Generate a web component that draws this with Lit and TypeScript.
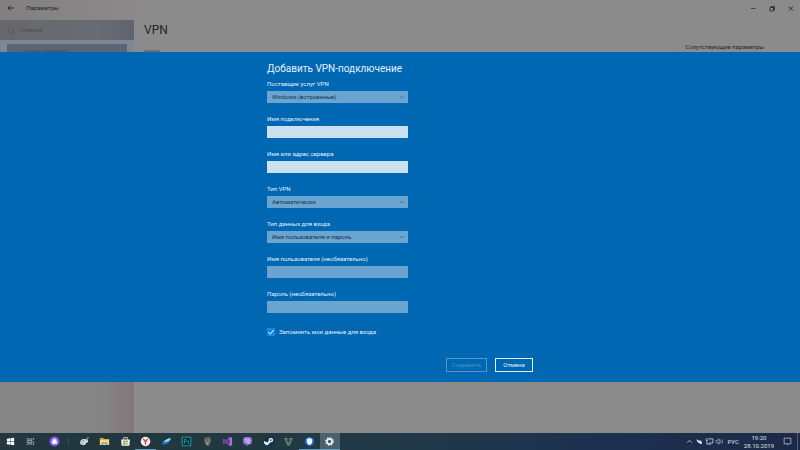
import { LitElement, html, css, svg, TemplateResult } from "lit";
import { customElement, property, state } from "lit/decorators.js";
import { classMap } from "lit/directives/class-map.js";

interface Field {
  id: string;
  label: string;
  kind: "select" | "text" | "password";
  value?: string;
  dim?: boolean;
}

const FIELDS: Field[] = [
  { id: "provider", label: "Поставщик услуг VPN", kind: "select", value: "Windows (встроенные)" },
  { id: "name", label: "Имя подключения", kind: "text" },
  { id: "server", label: "Имя или адрес сервера", kind: "text" },
  { id: "type", label: "Тип VPN", kind: "select", value: "Автоматически" },
  { id: "auth", label: "Тип данных для входа", kind: "select", value: "Имя пользователя и пароль" },
  { id: "user", label: "Имя пользователя (необязательно)", kind: "text", dim: true },
  { id: "password", label: "Пароль (необязательно)", kind: "password", dim: true },
];

interface App {
  name: string;
  icon: TemplateResult;
  running?: boolean;
  active?: boolean;
}

const SYSTEM: Record<string, TemplateResult> = {
  start: svg`<path fill="#f4fafc" d="M2 3 5.6 2.5V5.8H2ZM6 2.4 10 1.9V5.8H6ZM2 6.2H5.600V9.500L2 9ZM6 6.2H10V10.100L6 9.600Z"/>`,
  tasks: svg`<g fill="none" stroke="#b9c6cb" stroke-width=".8"><path d="M2.4 2.2V3.4H7.6V2.2M2.4 9.8V8.6H7.6V9.8M2.4 5H7.6V7H2.4ZM9.4 2.2V4.4M9.4 6V9.8"/></g>`,
  alice: svg`<circle cx="6" cy="6" r="5.500" fill="#7b55ea"/><circle cx="6" cy="6" r="3.8" fill="#9a7bf5"/><path fill="#fff" d="M6 2.8C6.900 2.8 9 6.7 8.800 7.6 8.300 8.900 3.700 8.900 3.200 7.6 3 6.7 5.100 2.8 6 2.8Z"/>`,
};

const APPS: App[] = [
  {
    name: "Paint",
    icon: svg`<path d="M1.2 7C1.2 4.4 3.6 3.1 6 3.3 8.6 3.4 10.500 4.8 10 6.2 9.6 7.3 7.9 6.9 7.6 8 7.4 9.6 5.6 10.300 4 9.8 2.3 9.4 1.2 8.600 1.2 7Z" fill="#d2e0e3"/><circle cx="3.2" cy="6" r=".7" fill="#61889b"/><circle cx="5" cy="4.9" r=".7" fill="#8b6f65"/><circle cx="4.3" cy="8" r=".7" fill="#58816d"/><path d="M6.500 6.500 10.3 1.4" stroke="#e0bb7b" stroke-width="1.1"/>`,
  },
  {
    name: "Проводник",
    icon: svg`<path fill="#dca83a" d="M1 2.2H4.6L5.5 3.2H11V9.8H1Z"/><path fill="#f8dc7b" d="M1 4.2H11V9.8H1Z"/><path fill="#5c9fc1" d="M3 7H9V9.8H7.6V8.4H4.4V9.8H3Z"/>`,
  },
  {
    name: "Магазин",
    icon: svg`<path d="M4 4V1.8H8V4" fill="none" stroke="#dfe8e5" stroke-width=".9"/><path fill="#f2f5ef" d="M1.2 3.7H10.8L10.2 10.6H1.8Z"/><path fill="#d96d43" d="M3.6 5H5.7V7H3.6Z"/><path fill="#71a642" d="M6.3 5H8.4V7H6.3Z"/><path fill="#3e93bd" d="M3.6 7.5H5.7V9.5H3.6Z"/><path fill="#dfb343" d="M6.3 7.5H8.4V9.5H6.3Z"/>`,
  },
  {
    name: "Яндекс.Браузер",
    running: true,
    icon: svg`<circle cx="6" cy="6" r="5.2" fill="#f5eff0"/><path d="M3.6 3.2 6 6.3 8.4 3.2M6 6V9.6" fill="none" stroke="#ce3f4b" stroke-width="1.5"/>`,
  },
  {
    name: "Почта",
    icon: svg`<path fill="#2177c7" d="M.8 8.6C2.4 4.9 5.8 2.7 10.9 2.4 10.6 6.8 6.3 10.7.8 8.6Z"/><path fill="#a5def5" d="M2.8 6.5C4.8 3.8 7.4 2.7 10.9 2.4 9.7 5.2 6.7 6.8 2.8 6.5Z"/>`,
  },
  {
    name: "Photoshop",
    icon: svg`<rect x="1.3" y="1.3" width="9.4" height="9.4" fill="#08252f" stroke="#28a9b3" stroke-width=".9"/><path d="M3.6 8.8V3.6H5C6.8 3.6 6.8 6.2 5 6.2H3.7M8.8 5.6C7.4 5.1 7 6.3 8 6.8 9.3 7.4 8.5 8.9 7 8.3" fill="none" stroke="#32b1be" stroke-width=".9"/>`,
  },
  {
    name: "Игра",
    icon: svg`<path fill="#64605d" d="M2.6 2.2C4 .9 8.2.9 9.5 2.2L9.2 7.5 7.7 10.5H4.6L2.9 7.5Z"/><path fill="#b5aaa0" d="M3 4H5.5V6H3ZM6.6 4H9V6H6.6ZM5 7H7V9.3H5Z"/><path fill="#302c2d" d="M3.6 4.6H5V5.5H3.6ZM7 4.6H8.4V5.5H7Z"/>`,
  },
  {
    name: "Visual Studio",
    icon: svg`<path fill="#7645b8" d="M8.3.9 11 2.1V9.9L8.3 11.1 4.3 7.3 2 9.1 1 8.6V3.4L2 2.9 4.3 4.7ZM8.3 4 5.8 6 8.3 8ZM2.1 4.8V7.2L3.3 6Z"/><path fill="#a574dc" d="M8.3.9 11 2.1V9.9L8.3 11.1Z"/>`,
  },
  {
    name: "Viber",
    icon: svg`<path fill="#9274d4" d="M3.6 1.2H8.4C10.2 1.3 10.9 2.5 10.9 5.4 10.9 8.6 9.8 9.5 6.9 9.5L5 11.3V9.4C2 9.3 1.1 8.2 1.1 5.4 1.1 2.6 1.9 1.3 3.6 1.2Z"/><path d="M3.8 3.4C3.5 5.6 5.6 7.9 7.9 7.8L8.2 6.9 7.2 6.3 6.5 6.8 5 5.2 5.4 4.5 4.7 3.1ZM6.2 2.9C7.9 3 8.8 4 8.8 5.6M6.4 4.1C7.2 4.2 7.6 4.7 7.6 5.4" fill="none" stroke="#f0eafd" stroke-width=".7"/>`,
  },
  {
    name: "Steam",
    icon: svg`<circle cx="6" cy="6" r="5.2" fill="#12304c"/><path fill="#eaf3f7" d="M1 5.4 5 7 6.300 5.2A2.4 2.4 0 1 1 8.300 6.900L6.1 8.600A2 2 0 0 1 2.400 8.900L1.2 8Z"/><circle cx="8.5" cy="4.5" r=".9" fill="#12304c"/>`,
  },
  {
    name: "GTA V",
    icon: svg`<path fill="#5e8166" d="M1 2.2H4.2L6 8.2 7.8 2.2H11L7.2 10.6H4.8Z"/><path fill="#344e46" d="M3.5 4H8.5L7.8 6H4.3Z"/><path d="M3 3.1H9" stroke="#94a28a" stroke-width=".5"/>`,
  },
  {
    name: "VPN",
    running: true,
    icon: svg`<circle cx="6" cy="6" r="5.2" fill="#1e63cf"/><path fill="#f5faff" d="M6 2.2 9 3.3V6C9 8 7.8 9.1 6 9.9 4.2 9.1 3 8 3 6V3.3Z"/>`,
  },
  {
    name: "Параметры",
    running: true,
    active: true,
    icon: svg`<circle cx="6" cy="6" r="2.9" fill="none" stroke="#f3f6f7" stroke-width="1.8"/><circle cx="6" cy="6" r="4.2" fill="none" stroke="#f3f6f7" stroke-width="1.1" stroke-dasharray="1.65 1.65"/>`,
  },
];

const icon = (body: TemplateResult) => html`<svg viewBox="0 0 12 12" aria-hidden="true">${body}</svg>`;

const reset = css`
  * {
    box-sizing: border-box;
  }
  button,
  input,
  select {
    font: inherit;
    color: inherit;
    margin: 0;
    padding: 0;
    border: 0;
    border-radius: 0;
    background: none;
    appearance: none;
  }
  svg {
    display: block;
    width: 12px;
    height: 12px;
    flex: none;
  }
`;

@customElement("settings-window")
export class SettingsWindow extends LitElement {
  static styles = [
    reset,
    css`
      :host {
        display: flex;
        background: #8b8b8b;
        color: #252525;
      }
      .side {
        flex: none;
        width: 134px;
        display: flex;
        flex-direction: column;
        background: linear-gradient(90deg, #858585 0 75%, #84767a);
      }
      .bar {
        display: flex;
        align-items: center;
        gap: 9px;
        height: 20px;
        padding: 0 5px 5px;
        background: linear-gradient(90deg, #817f80, #8b898a);
      }
      .home {
        display: flex;
        align-items: center;
        gap: 3px;
        height: 20px;
        padding: 0 5px;
        background: linear-gradient(90deg, #66686a, #686d73 70%, #60646d);
        color: #4d5053;
      }
      .find {
        padding: 4px 7px;
        background: #7b8997;
      }
      .find input {
        display: block;
        width: 100%;
        height: 12px;
        padding: 0 16px;
        background: #5d6575;
      }
      .find input::placeholder {
        color: #454c58;
        opacity: 1;
      }
      .main {
        flex: 1;
        display: flex;
        flex-direction: column;
      }
      .controls {
        display: flex;
        justify-content: flex-end;
        gap: 7px;
        height: 15px;
        padding-right: 3px;
        align-items: center;
      }
      .body {
        display: flex;
        justify-content: space-between;
        padding: 7px 36px 0 10px;
      }
      h1 {
        margin: 0;
        font-size: 12px;
        line-height: 16px;
        font-weight: 400;
      }
      .toggle {
        width: 16px;
        height: 6px;
        margin-top: 12px;
        background: #707070;
      }
      h2 {
        margin: 21px 0 0;
        font-size: 6px;
        line-height: 8px;
        font-weight: 400;
      }
    `,
  ];

  render() {
    return html`
      <aside class="side">
        <div class="bar">
          <button aria-label="Назад">
            ${icon(svg`<path d="M9 6H3M5.5 3.5 3 6 5.5 8.5" fill="none" stroke="#252525" stroke-width=".9"/>`)}
          </button>
          <span>Параметры</span>
        </div>
        <div class="home">
          ${icon(svg`<path d="M2.5 6 6 3 9.5 6M3.5 5.5V9H8.5V5.5" fill="none" stroke="#55585b" stroke-width=".8"/>`)}
          <span>Главная</span>
        </div>
        <div class="find"><input type="search" aria-label="Найти параметр" placeholder="Найти параметр" /></div>
      </aside>
      <main class="main">
        <div class="controls">
          <button aria-label="Свернуть">${icon(svg`<path d="M4 6.5H8.5" stroke="#333" stroke-width=".8"/>`)}</button>
          <button aria-label="Восстановить">
            ${icon(svg`<path d="M4 5.5H7.5V9H4ZM5 5.5V4.5H8.5V8H7.5" fill="none" stroke="#222" stroke-width=".8"/>`)}
          </button>
          <button aria-label="Закрыть">
            ${icon(svg`<path d="M4 4.5 8 8.5M8 4.5 4 8.5" stroke="#222" stroke-width=".9"/>`)}
          </button>
        </div>
        <div class="body">
          <div>
            <h1>VPN</h1>
            <div class="toggle"></div>
          </div>
          <h2>Сопутствующие параметры</h2>
        </div>
      </main>
    `;
  }
}

@customElement("vpn-dialog")
export class VpnDialog extends LitElement {
  @state() private remember = true;

  static styles = [
    reset,
    css`
      :host {
        display: block;
        padding: 10px 0;
        background: #0067b3;
        color: #e4f1fa;
      }
      form {
        width: 266px;
        margin: 0 auto;
      }
      h2 {
        margin: 0 0 5px;
        font-size: 10px;
        line-height: 13px;
        font-weight: 400;
      }
      .fields {
        width: 141px;
        display: grid;
        gap: 12px;
      }
      .field {
        display: grid;
        gap: 3px;
      }
      label {
        line-height: 8px;
      }
      .box {
        position: relative;
      }
      .box svg {
        position: absolute;
        right: 0;
        top: 0;
        pointer-events: none;
      }
      .control {
        display: block;
        width: 100%;
        height: 12px;
        padding: 0 5px;
        background: #cce1f0;
        color: #12334d;
      }
      .control.dim {
        background: #6aa5d2;
      }
      .remember {
        display: flex;
        align-items: center;
        gap: 4px;
        margin-top: 15px;
      }
      .tick {
        width: 8px;
        height: 8px;
        background: #1687e0;
        display: grid;
        place-items: center;
      }
      .tick input,
      .tick svg {
        grid-area: 1 / 1;
        width: 8px;
        height: 8px;
      }
      .tick svg {
        pointer-events: none;
      }
      .actions {
        display: flex;
        justify-content: flex-end;
        gap: 8px;
        margin-top: 22px;
      }
      .action {
        height: 14px;
        width: 38px;
        border: 1px solid #e0f0fb;
        line-height: 8px;
      }
      .action.save {
        width: 41px;
        border-color: #4e96cc;
        color: #4e96cc;
      }
    `,
  ];

  private control(f: Field) {
    if (f.kind === "select") {
      return html`<div class="box">
        <select id=${f.id} class="control dim"><option>${f.value}</option></select>
        ${icon(svg`<path d="M4 5 6 7 8 5" fill="none" stroke="#376f99" stroke-width=".8"/>`)}
      </div>`;
    }
    return html`<input id=${f.id} type=${f.kind} class=${classMap({ control: true, dim: !!f.dim })} />`;
  }

  render() {
    return html`<form @submit=${(e: Event) => e.preventDefault()}>
      <h2>Добавить VPN-подключение</h2>
      <div class="fields">
        ${FIELDS.map((f) => html`<div class="field"><label for=${f.id}>${f.label}</label>${this.control(f)}</div>`)}
      </div>
      <div class="remember">
        <span class="tick">
          <input
            id="remember"
            type="checkbox"
            .checked=${this.remember}
            @change=${() => (this.remember = !this.remember)}
          />
          ${this.remember ? icon(svg`<path d="M2 6.5 5 9 10 3" fill="none" stroke="#fff" stroke-width="1.5"/>`) : ""}
        </span>
        <label for="remember">Запомнить мои данные для входа</label>
      </div>
      <div class="actions">
        <button class="action save" disabled>Сохранить</button>
        <button class="action" type="button">Отмена</button>
      </div>
    </form>`;
  }
}

@customElement("task-bar")
export class TaskBar extends LitElement {
  @property({ attribute: false }) apps: App[] = APPS;

  static styles = [
    reset,
    css`
      :host {
        display: flex;
        height: 17px;
        background: linear-gradient(90deg, #22373f, #20383f 30%, #213a48 50%, #1d3050 75%, #1b2946);
        color: #dde3ea;
      }
      .item {
        display: grid;
        place-items: center;
        width: 20px;
      }
      .alice {
        margin-left: 4px;
      }
      .split {
        width: 1px;
        margin: 5px 5px 5px 4px;
        background: #3c5058;
      }
      .apps {
        display: flex;
        width: 266px;
      }
      .apps .item {
        flex: 1;
      }
      .running {
        box-shadow: inset 0 -1px #5f9cc4;
      }
      .active {
        background: #4b616c;
      }
      .item svg {
        width: 11px;
        height: 11px;
      }
      .tray {
        display: flex;
        align-items: center;
        margin-left: auto;
        padding-right: 2px;
      }
      .tray .item {
        width: 10px;
      }
      .tray .item svg {
        width: 9px;
        height: 9px;
      }
      .lang {
        margin-left: 3px;
      }
      .clock {
        margin: 0 5px;
        line-height: 8px;
        text-align: center;
      }
      .tray .notes {
        width: 16px;
        margin-right: 2px;
      }
      .peek {
        align-self: stretch;
        width: 1px;
        background: #53607a;
      }
    `,
  ];

  private tray(name: string, body: TemplateResult, cls = "") {
    return html`<button class="item ${cls}" aria-label=${name}>${icon(body)}</button>`;
  }

  render() {
    return html`
      <button class="item" aria-label="Пуск">${icon(SYSTEM.start)}</button>
      <button class="item" aria-label="Представление задач">${icon(SYSTEM.tasks)}</button>
      <button class="item alice" aria-label="Алиса">${icon(SYSTEM.alice)}</button>
      <span class="split"></span>
      <nav class="apps">
        ${this.apps.map(
          (a) => html`<button
            class=${classMap({ item: true, running: !!a.running, active: !!a.active })}
            aria-label=${a.name}
          >
            ${icon(a.icon)}
          </button>`
        )}
      </nav>
      <div class="tray">
        ${this.tray("Скрытые значки", svg`<path d="M3 7.5 6 4.5 9 7.5" fill="none" stroke="#dde3ea"/>`)}
        ${this.tray("Загрузки", svg`<path fill="#dde3ea" d="M1.5 3 5 4.5 8.5 5 9.5 9.5 6 8.5 3.5 6.5Z"/>`)}
        ${this.tray("Сеть", svg`<path d="M3.5 2.5H10.5V8H5M1.5 2V4.5H3.5M2.5 4.5V9.5H8" fill="none" stroke="#dde3ea"/>`)}
        ${this.tray("Громкость", svg`<path d="M1.5 4.5H3L5.5 2.5V9.5L3 7.5H1.5ZM7 4.5C8 5.5 8 6.5 7 7.5M8.5 3C10.5 5 10.5 7 8.5 9" fill="none" stroke="#c3cbd6" stroke-width=".9"/>`)}
        <span class="lang">РУС</span>
        <time class="clock" datetime="2019-10-28T19:20">19:20<br />28.10.2019</time>
        ${this.tray("Уведомления", svg`<path d="M1.5 1.5H10.5V9H7.5L6.2 10.5V9H1.5Z" fill="none" stroke="#cfd6df" stroke-width=".9"/>`, "notes")}
        <span class="peek"></span>
      </div>
    `;
  }
}

@customElement("app-root")
export class AppRoot extends LitElement {
  static styles = css`
    :host {
      display: flex;
      flex-direction: column;
      min-height: 100vh;
      font: 6px/8px Roboto, "Liberation Sans", sans-serif;
    }
    .desktop {
      flex: 1;
      display: grid;
      align-items: center;
    }
    .desktop > * {
      grid-area: 1 / 1;
    }
    settings-window {
      align-self: stretch;
    }
  `;

  render() {
    return html`
      <div class="desktop">
        <settings-window></settings-window>
        <vpn-dialog></vpn-dialog>
      </div>
      <task-bar></task-bar>
    `;
  }
}
